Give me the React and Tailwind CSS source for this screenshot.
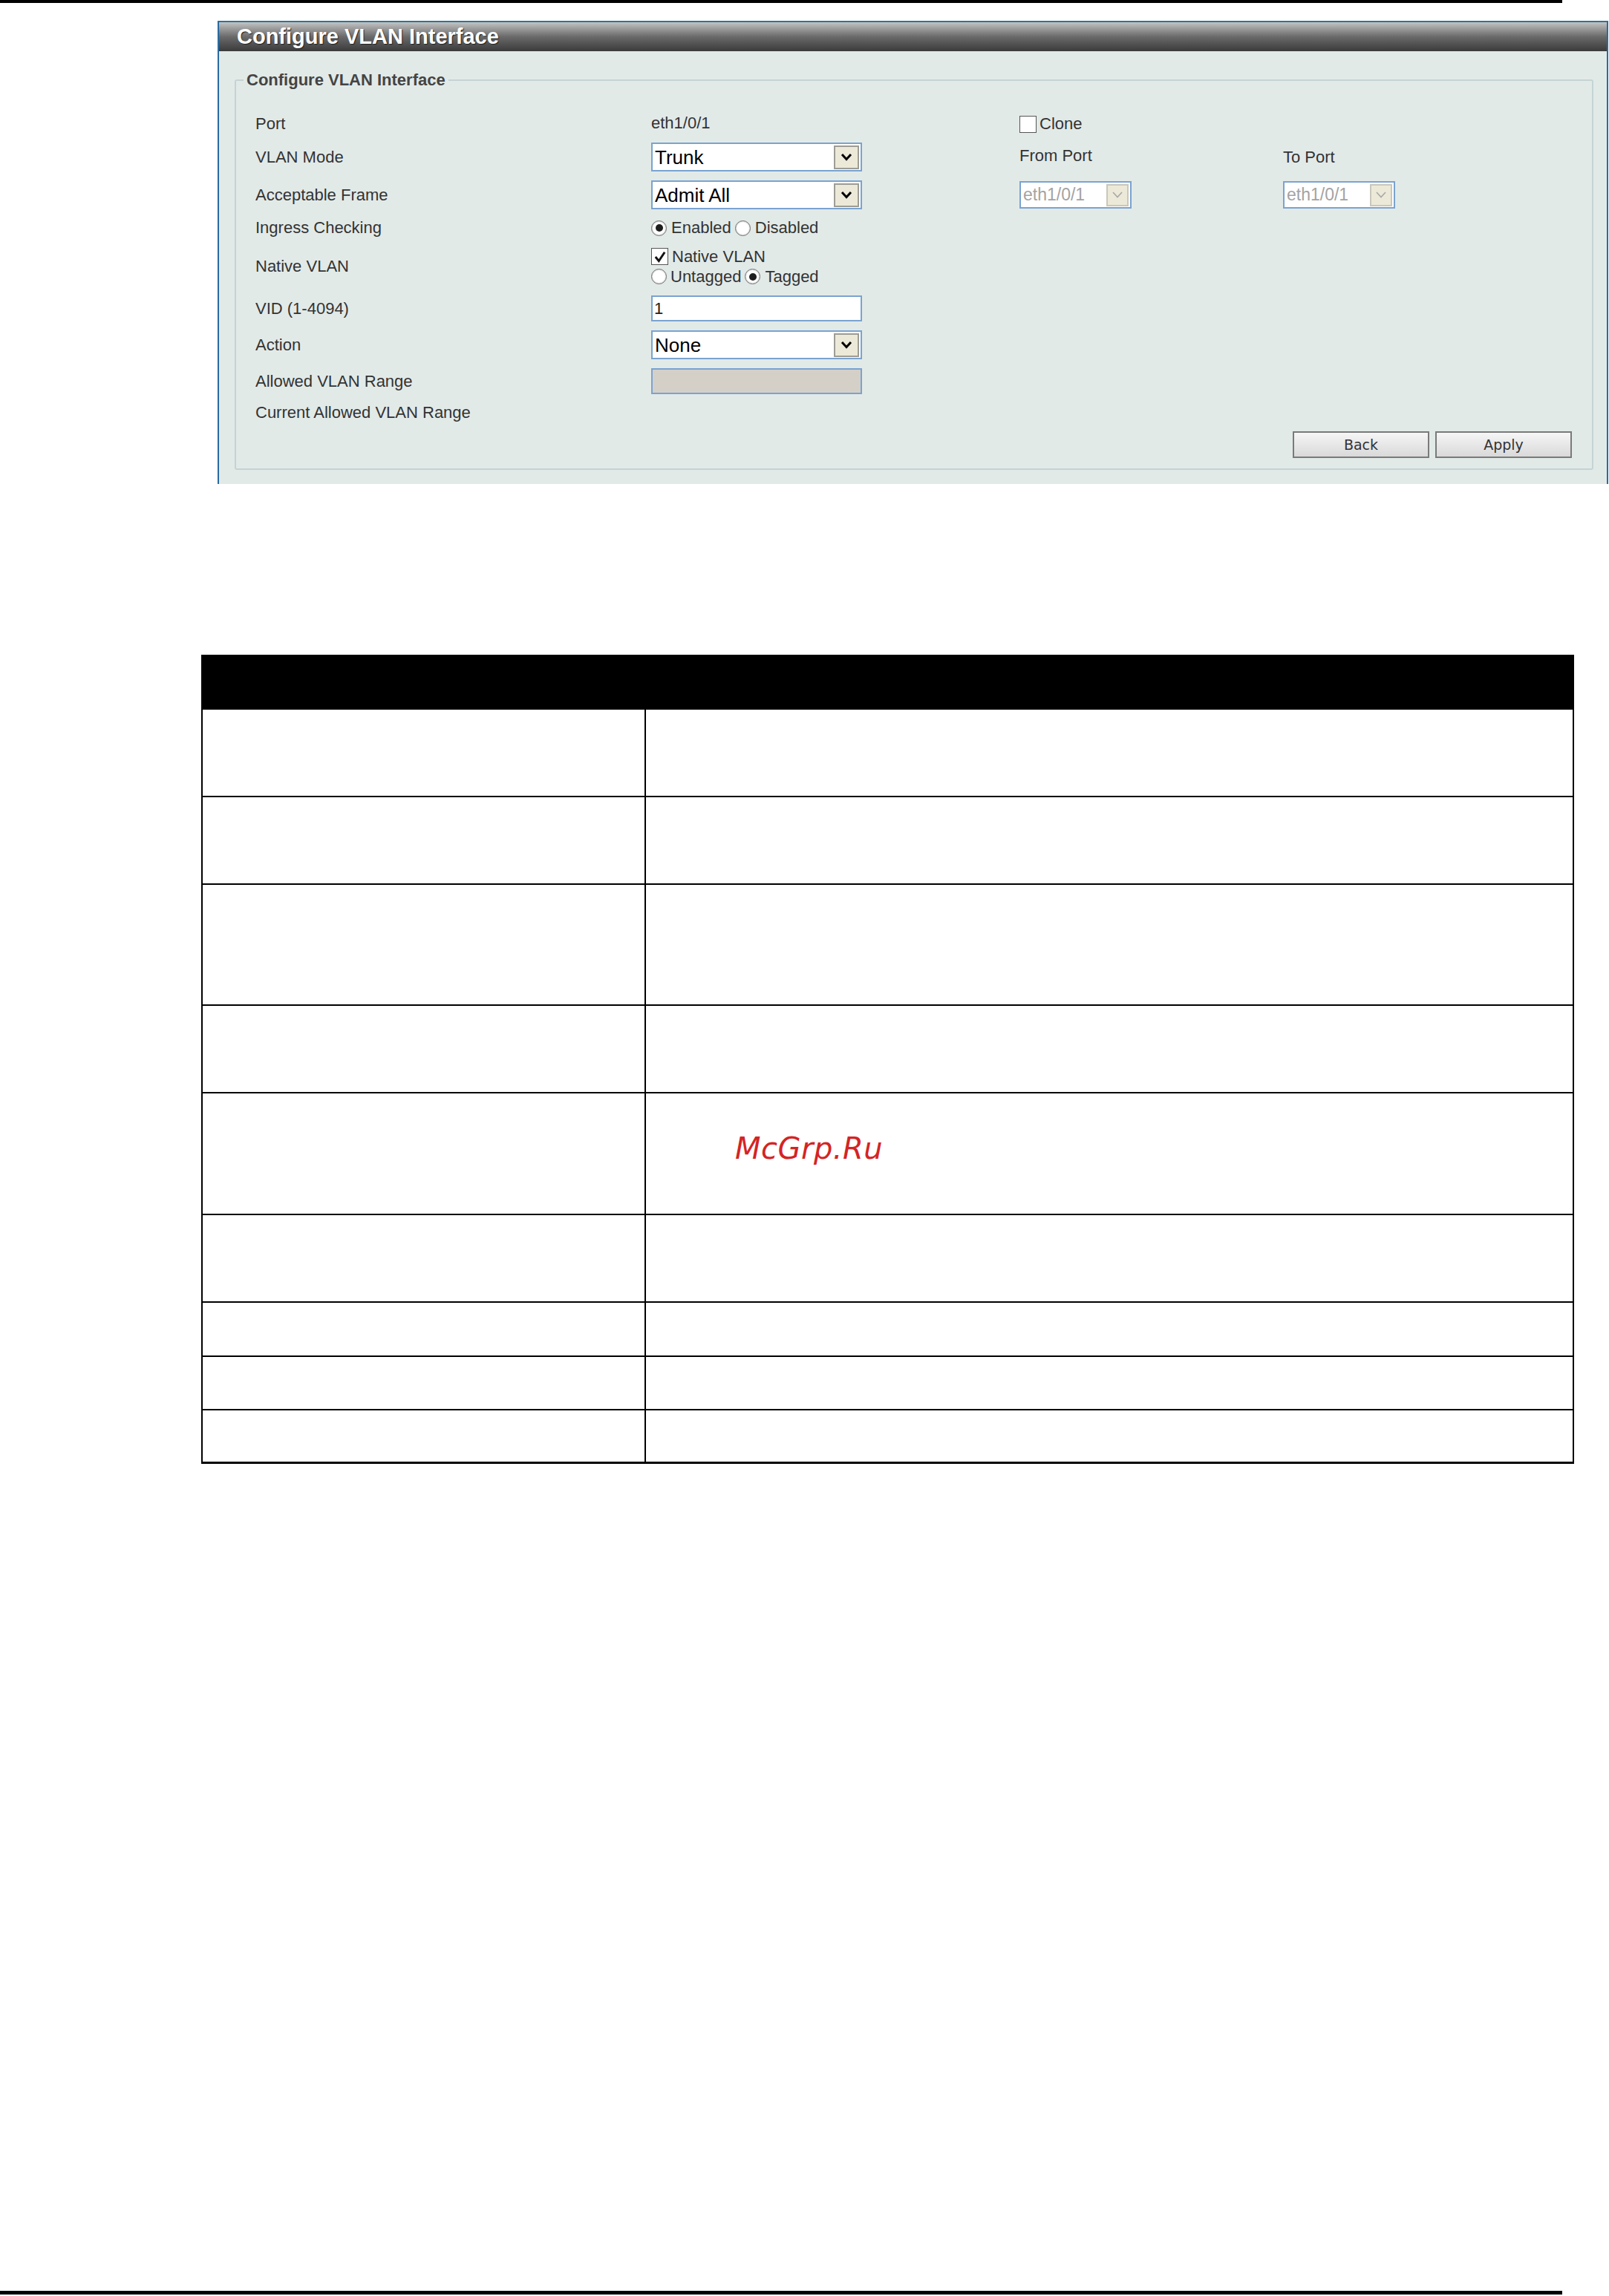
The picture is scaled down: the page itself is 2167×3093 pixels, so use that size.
import React from "react";

const Chevron = ({ color = "#000", sw = 3 }) => (
  <svg width="16" height="11" viewBox="0 0 16 11">
    <polyline points="2,2 8,8.5 14,2" fill="none" stroke={color} strokeWidth={sw} strokeLinejoin="miter" />
  </svg>
);

const Select = ({ value }) => (
  <div className="flex items-center justify-between bg-white border-2 border-[#7aa3d0] h-[39px] w-[284px] pl-[3px] pr-[2px]">
    <span className="text-[26px] leading-none text-black">{value}</span>
    <span className="w-[34px] h-[32px] bg-[#ece9d8] border-2 border-[#9d9c95] flex items-center justify-center">
      <Chevron />
    </span>
  </div>
);

const DisSelect = ({ value }) => (
  <div className="flex items-center justify-between bg-white border-2 border-[#7aa3d0] h-[37px] w-[151px] pl-[3px] pr-[2px]">
    <span className="text-[23px] leading-none text-[#a3a3a3]">{value}</span>
    <span className="w-[30px] h-[30px] bg-[#ece9d8] border-2 border-[#c9c7bd] flex items-center justify-center">
      <Chevron color="#a8a8a8" sw={1.6} />
    </span>
  </div>
);

const Radio = ({ checked }) => (
  <span className="inline-flex w-[21px] h-[21px] rounded-full border border-[#6e6e6e] bg-white items-center justify-center shadow-[inset_0_0_2px_#9a9a9a] shrink-0">
    {checked && <span className="w-[10px] h-[10px] rounded-full bg-[#1e1e1e]" />}
  </span>
);

const Checkbox = ({ checked }) => (
  <span className="inline-flex w-[23px] h-[23px] border border-[#555] bg-white items-center justify-center shrink-0">
    {checked && (
      <svg width="18" height="18" viewBox="0 0 16 16">
        <polyline points="2.5,8 6.5,13 13.5,2.5" fill="none" stroke="#111" strokeWidth="2.6" />
      </svg>
    )}
  </span>
);

const Label = ({ children }) => (
  <div className="w-[533px] shrink-0 text-[22px] leading-none text-[#333]">{children}</div>
);

const Txt = ({ children, className = "" }) => (
  <span className={`text-[22px] leading-none text-[#333] ${className}`}>{children}</span>
);

const Btn = ({ children }) => (
  <div className="w-[184px] h-[36px] border-2 border-[#7a7a7a] bg-linear-to-b from-[#f6f6f6] to-[#d9d9d9] flex items-center justify-center text-[19px] text-[#333] font-['DejaVu_Sans',sans-serif]">
    {children}
  </div>
);

const rows = [118, 118, 163, 118, 164, 118, 73, 72, 72];

export default function App() {
  return (
    <div className="relative w-[2167px] h-[3093px] bg-white flex flex-col font-['Liberation_Sans',Arial,sans-serif]">
      <div className="h-[4px] w-[2104px] bg-black shrink-0" />

      {/* Panel */}
      <div className="mt-[24px] ml-[293px] w-[1873px] border-x-2 border-t-2 border-x-[#2b6aa0] border-t-[#2f7394] shrink-0">
        <div className="h-[39px] bg-linear-to-b from-[#c4c4c4] via-[#6a6a6a] to-[#3b3b3b] flex items-center pl-[24px]">
          <span className="text-[29px] font-bold text-white leading-none [text-shadow:1px_1px_1px_#222]">
            Configure VLAN Interface
          </span>
        </div>
        <div className="bg-[#e2eae8] pt-[26px] pl-[21px] pb-[19px]">
          <fieldset className="w-[1830px] border-2 border-[#c5d3d3] rounded-[3px] pt-[33px] pb-[14px] pl-0 pr-[27px]">
            <legend className="ml-[10px] px-[4px] text-[22px] leading-[26px] font-bold text-[#444]">
              Configure VLAN Interface
            </legend>
            <div className="flex flex-col gap-[12px] pl-[26px]">
              {/* Port */}
              <div className="flex items-center h-[26px]">
                <Label>Port</Label>
                <div className="w-[496px] shrink-0"><Txt>eth1/0/1</Txt></div>
                <div className="flex items-center gap-[4px]">
                  <Checkbox />
                  <Txt>Clone</Txt>
                </div>
              </div>
              {/* VLAN Mode */}
              <div className="flex items-center h-[39px]">
                <Label>VLAN Mode</Label>
                <div className="w-[496px] shrink-0"><Select value="Trunk" /></div>
                <div className="w-[355px] shrink-0"><Txt>From Port</Txt></div>
                <Txt>To Port</Txt>
              </div>
              {/* Acceptable Frame */}
              <div className="flex items-center h-[39px]">
                <Label>Acceptable Frame</Label>
                <div className="w-[496px] shrink-0"><Select value="Admit All" /></div>
                <div className="w-[355px] shrink-0"><DisSelect value="eth1/0/1" /></div>
                <DisSelect value="eth1/0/1" />
              </div>
              {/* Ingress */}
              <div className="flex items-center h-[26px]">
                <Label>Ingress Checking</Label>
                <div className="flex items-center">
                  <Radio checked />
                  <Txt className="ml-[6px]">Enabled</Txt>
                  <span className="ml-[5px] flex"><Radio /></span>
                  <Txt className="ml-[6px]">Disabled</Txt>
                </div>
              </div>
              {/* Native VLAN */}
              <div className="flex items-center h-[54px]">
                <Label>Native VLAN</Label>
                <div className="flex flex-col">
                  <div className="flex items-center h-[27px]">
                    <Checkbox checked />
                    <Txt className="ml-[5px]">Native VLAN</Txt>
                  </div>
                  <div className="flex items-center h-[27px]">
                    <Radio />
                    <Txt className="ml-[5px]">Untagged</Txt>
                    <span className="ml-[5px] flex"><Radio checked /></span>
                    <Txt className="ml-[6px]">Tagged</Txt>
                  </div>
                </div>
              </div>
              {/* VID */}
              <div className="flex items-center h-[35px]">
                <Label>VID (1-4094)</Label>
                <div className="w-[284px] h-[35px] bg-white border-2 border-[#7aa3d0] flex items-center pl-[2px]">
                  <span className="text-[22px] leading-none text-[#222]">1</span>
                </div>
              </div>
              {/* Action */}
              <div className="flex items-center h-[39px]">
                <Label>Action</Label>
                <Select value="None" />
              </div>
              {/* Allowed VLAN Range */}
              <div className="flex items-center h-[35px]">
                <Label>Allowed VLAN Range</Label>
                <div className="w-[284px] h-[35px] bg-[#d4d0c8] border-2 border-[#7aa3d0]" />
              </div>
              {/* Current */}
              <div className="flex items-center h-[26px]">
                <Label>Current Allowed VLAN Range</Label>
              </div>
              {/* Buttons */}
              <div className="flex justify-end gap-[8px] h-[36px]">
                <Btn>Back</Btn>
                <Btn>Apply</Btn>
              </div>
            </div>
          </fieldset>
        </div>
      </div>

      {/* Table */}
      <div className="mt-[230px] ml-[271px] w-[1849px] shrink-0 border-x-2 border-black">
        <div className="h-[74px] bg-black" />
        {rows.map((h, i) => (
          <div
            key={i}
            className={`flex border-black ${i === rows.length - 1 ? "border-b-[3px]" : "border-b-2"}`}
            style={{ height: h }}
          >
            <div className="w-[597px] shrink-0 border-r-2 border-black" />
            <div className="flex-1" />
          </div>
        ))}
      </div>

      {/* Watermark */}
      <div className="absolute left-[990px] top-[1527px] text-[40px] leading-none italic text-[#d42424] font-['DejaVu_Sans',sans-serif] tracking-[0.5px]">
        McGrp.Ru
      </div>

      <div className="mt-auto mb-[2px] h-[5px] w-[2104px] bg-black shrink-0" />
    </div>
  );
}
